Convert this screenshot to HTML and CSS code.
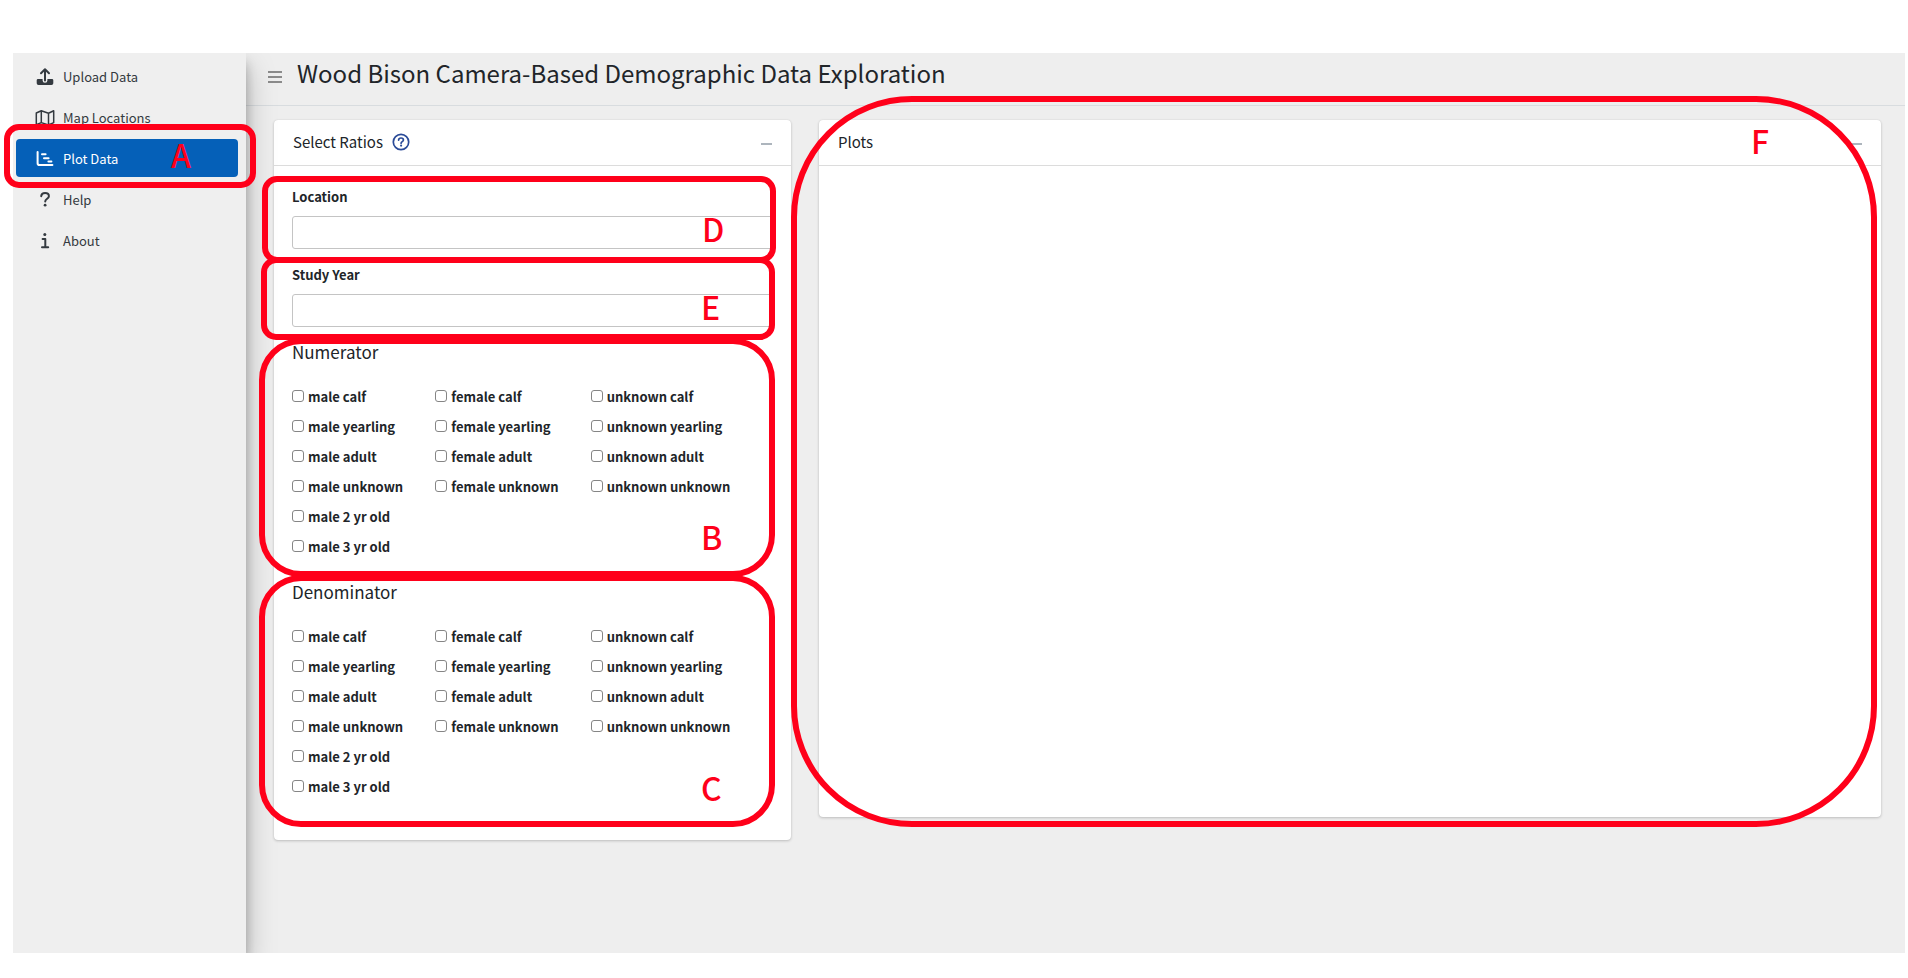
FILE: index.html
```
<!DOCTYPE html>
<html lang="en">
<head>
<meta charset="utf-8">
<title>Wood Bison Camera-Based Demographic Data Exploration</title>
<link rel="stylesheet" href="styles.css">
</head>
<body>
<div class="app">
  <nav class="sidebar">
    <a class="nav-item" href="#upload">
      <svg class="nav-icon" viewBox="0 0 20 20" aria-hidden="true"><path d="M10 13.5V2.4M6 6.2l4-4 4 4" class="stroke"/><path d="M3 12h4.6v1.4a2.4 2.4 0 0 0 4.8 0V12H17a1.3 1.3 0 0 1 1.3 1.3v2.9a1.8 1.8 0 0 1-1.8 1.8h-13a1.8 1.8 0 0 1-1.8-1.8v-2.9A1.3 1.3 0 0 1 3 12z"/></svg>
      <span>Upload Data</span>
    </a>
    <a class="nav-item" href="#map">
      <svg class="nav-icon" viewBox="0 0 20 20" aria-hidden="true"><path d="M1.3 5l5-2.2 7.2 2.4 5.2-2.4v11.8l-5.2 2.4-7.2-2.4-5 2.2zM6.3 2.8v11.8M13.5 5.2V17" class="stroke thin"/></svg>
      <span>Map Locations</span>
    </a>
    <a class="nav-item active" href="#plot">
      <svg class="nav-icon" viewBox="0 0 20 20" aria-hidden="true"><path d="M2.6 3v11.2a1.8 1.8 0 0 0 1.8 1.8h13M7 5.2h3.6M9 9.2h4.6M13.4 12.6h3" class="stroke"/></svg>
      <span>Plot Data</span>
      <span class="callout callout-a"><span class="callout-letter">A</span></span>
    </a>
    <a class="nav-item" href="#help">
      <svg class="nav-icon" viewBox="0 0 20 20" aria-hidden="true"><path d="M6.2 6.2C6.4 4.2 8 3 10.1 3c2.2 0 3.8 1.3 3.8 3.2 0 2.6-3.7 2.6-3.7 5.4" class="stroke"/><circle cx="10.1" cy="15.2" r="1.4"/></svg>
      <span>Help</span>
    </a>
    <a class="nav-item" href="#about">
      <svg class="nav-icon" viewBox="0 0 20 20" aria-hidden="true"><circle cx="9.8" cy="3.4" r="1.5"/><path d="M7.6 8h2.7v8M7 16.2h6.2" class="stroke"/></svg>
      <span>About</span>
    </a>
  </nav>

  <div class="content">
    <header class="topbar">
      <button class="menu-button" type="button" aria-label="Toggle menu">
        <svg viewBox="0 0 14 14" aria-hidden="true"><path d="M0 2h14M0 7h14M0 12h14"/></svg>
      </button>
      <h1 class="title">Wood Bison Camera-Based Demographic Data Exploration</h1>
    </header>

    <main class="columns">
      <div class="column column-narrow">
        <section class="card">
          <div class="card-header">
            <h2 class="card-title">Select Ratios</h2>
            <button class="help-button" type="button" aria-label="Help">
              <svg viewBox="0 0 18 18" aria-hidden="true"><circle cx="9" cy="9" r="7.7" class="ring"/><path d="M6.6 7.1c.1-1.3 1.1-2.1 2.4-2.1s2.4.8 2.4 2c0 1.6-2.3 1.6-2.3 3.2" class="ring"/><circle cx="9.1" cy="12.6" r="1.1" class="dot"/></svg>
            </button>
            <button class="collapse-button" type="button" aria-label="Collapse"></button>
          </div>
          <div class="card-body">
            <label class="field-label" for="location">Location</label>
            <input class="field-input" id="location" type="text">
            <label class="field-label" for="year">Study Year</label>
            <input class="field-input" id="year" type="text">

            <h3 class="group-title">Numerator</h3>
            <div class="checks">
              <div class="check-column">
                <label class="check"><input type="checkbox">male calf</label>
                <label class="check"><input type="checkbox">male yearling</label>
                <label class="check"><input type="checkbox">male adult</label>
                <label class="check"><input type="checkbox">male unknown</label>
                <label class="check"><input type="checkbox">male 2 yr old</label>
                <label class="check"><input type="checkbox">male 3 yr old</label>
              </div>
              <div class="check-column">
                <label class="check"><input type="checkbox">female calf</label>
                <label class="check"><input type="checkbox">female yearling</label>
                <label class="check"><input type="checkbox">female adult</label>
                <label class="check"><input type="checkbox">female unknown</label>
              </div>
              <div class="check-column">
                <label class="check"><input type="checkbox">unknown calf</label>
                <label class="check"><input type="checkbox">unknown yearling</label>
                <label class="check"><input type="checkbox">unknown adult</label>
                <label class="check"><input type="checkbox">unknown unknown</label>
              </div>
            </div>

            <h3 class="group-title">Denominator</h3>
            <div class="checks">
              <div class="check-column">
                <label class="check"><input type="checkbox">male calf</label>
                <label class="check"><input type="checkbox">male yearling</label>
                <label class="check"><input type="checkbox">male adult</label>
                <label class="check"><input type="checkbox">male unknown</label>
                <label class="check"><input type="checkbox">male 2 yr old</label>
                <label class="check"><input type="checkbox">male 3 yr old</label>
              </div>
              <div class="check-column">
                <label class="check"><input type="checkbox">female calf</label>
                <label class="check"><input type="checkbox">female yearling</label>
                <label class="check"><input type="checkbox">female adult</label>
                <label class="check"><input type="checkbox">female unknown</label>
              </div>
              <div class="check-column">
                <label class="check"><input type="checkbox">unknown calf</label>
                <label class="check"><input type="checkbox">unknown yearling</label>
                <label class="check"><input type="checkbox">unknown adult</label>
                <label class="check"><input type="checkbox">unknown unknown</label>
              </div>
            </div>
          </div>
          <div class="callout callout-d"><span class="callout-letter">D</span></div>
          <div class="callout callout-e"><span class="callout-letter">E</span></div>
          <div class="callout callout-b"><span class="callout-letter">B</span></div>
          <div class="callout callout-c"><span class="callout-letter">C</span></div>
        </section>
      </div>

      <div class="column column-wide">
        <section class="card">
          <div class="card-header">
            <h2 class="card-title">Plots</h2>
            <button class="collapse-button" type="button" aria-label="Collapse"></button>
          </div>
          <div class="plot-area"></div>
          <div class="callout callout-f"><span class="callout-letter">F</span></div>
        </section>
      </div>
    </main>
  </div>
</div>
</body>
</html>
```

FILE: styles.css
```
* {
  box-sizing: border-box;
}

body {
  margin: 0;
  background: #fff;
  color: #212529;
  font-family: "Noto Sans CJK SC", "Noto Sans", sans-serif;
  font-size: 13px;
  line-height: 20px;
}

h1, h2, h3 {
  margin: 0;
  font-weight: 400;
}

button {
  padding: 0;
  border: 0;
  background: none;
}

.app {
  display: flex;
  min-height: calc(100vh - 78px);
  margin: 53px 3px 25px 13px;
  background: #eee;
}

/* Sidebar */

.sidebar {
  position: relative;
  z-index: 2;
  display: flex;
  flex-direction: column;
  flex: 0 0 233px;
  gap: 3px;
  padding: 4px 8px 4px 3px;
  background: #efefef;
}

.sidebar::before {
  content: "";
  position: absolute;
  z-index: -1;
  inset: 0;
  box-shadow: 0 14px 28px rgba(0, 0, 0, 0.25), 0 10px 10px rgba(0, 0, 0, 0.22);
  clip-path: inset(0 -60px 0 0);
  pointer-events: none;
}

.nav-item {
  position: relative;
  display: flex;
  align-items: center;
  gap: 8px;
  height: 38px;
  padding: 2px 19px 0;
  border-radius: 4px;
  color: #343a40;
  text-decoration: none;
}

.nav-item.active {
  background: #0560b8;
  color: #fff;
}

.nav-icon {
  width: 20px;
  height: 20px;
  fill: currentColor;
}

.nav-icon .stroke {
  fill: none;
  stroke: currentColor;
  stroke-width: 2;
  stroke-linecap: round;
  stroke-linejoin: round;
}

.nav-icon .thin {
  stroke-width: 1.5;
}

/* Header */

.content {
  flex: 1;
  min-width: 0;
}

.topbar {
  display: flex;
  align-items: center;
  gap: 15px;
  height: 53px;
  padding: 0 22px 12px;
  border-bottom: 1px solid #d8dcdf;
}

.menu-button {
  width: 14px;
  height: 14px;
  margin-top: 8px;
}

.menu-button svg {
  display: block;
  stroke: #8b8b8b;
  stroke-width: 2;
}

.title {
  font-size: 24px;
  line-height: 32px;
}

/* Cards */

.columns {
  display: flex;
  align-items: flex-start;
  padding: 14px 10px 0 14px;
}

.column {
  min-width: 0;
  padding: 0 14px;
}

.column-narrow {
  width: 33.3333%;
}

.column-wide {
  width: 66.6667%;
}

.card {
  position: relative;
  border-radius: 4px;
  background: #fff;
  box-shadow: 0 0 1px rgba(0, 0, 0, 0.13), 0 1px 3px rgba(0, 0, 0, 0.2);
}

.card-header {
  display: flex;
  align-items: center;
  gap: 9px;
  height: 46px;
  padding: 0 19px 2px;
  border-bottom: 1px solid #dcdcdc;
}

.card-title {
  font-size: 15px;
  line-height: 20px;
}

.help-button {
  width: 18px;
  height: 18px;
}

.help-button svg {
  display: block;
}

.help-button .ring {
  fill: none;
  stroke: #294a98;
  stroke-width: 1.7;
  stroke-linecap: round;
}

.help-button .dot {
  fill: #294a98;
}

.collapse-button {
  width: 11px;
  height: 2px;
  margin: 4px 0 0 auto;
  background: #adb5bd;
}

.card-body {
  padding: 21px 18px 38px;
}

.plot-area {
  height: 651px;
}

/* Form */

.field-label {
  display: block;
  margin-bottom: 9px;
  font-weight: 700;
}

.field-input {
  display: block;
  width: 100%;
  height: 33px;
  margin-bottom: 16px;
  padding: 0 8px;
  border: 1px solid #c4c4c4;
  border-radius: 3px;
  background: #fff;
  font: inherit;
}

.group-title {
  padding-bottom: 21px;
  font-size: 17px;
  line-height: 18px;
}

.checks {
  display: flex;
  gap: 32px;
}

.checks + .group-title {
  padding-top: 21px;
}

.check {
  display: flex;
  align-items: center;
  gap: 4px;
  height: 30px;
  font-weight: 700;
  white-space: nowrap;
}

.check input {
  appearance: none;
  width: 12px;
  height: 12px;
  margin: 0 0 2px;
  border: 1px solid #858585;
  border-radius: 3px;
  background: #fff;
}

/* Annotation overlays */

.callout {
  position: absolute;
  z-index: 3;
  border: 6px solid #ff001a;
  border-radius: 15px;
  pointer-events: none;
}

.callout-letter {
  position: absolute;
  right: 44px;
  width: 24px;
  color: #ff001a;
  font-size: 32px;
  font-weight: 500;
  line-height: 32px;
}

.callout-a {
  inset: -15px -18px -11px -12px;
}

.callout-a .callout-letter {
  top: 8px;
  right: 55px;
}

.callout-d {
  top: 56px;
  right: 15px;
  left: -12px;
  height: 87px;
}

.callout-d .callout-letter {
  top: 30px;
}

.callout-e {
  top: 137px;
  right: 16px;
  left: -13px;
  height: 83px;
}

.callout-e .callout-letter {
  top: 27px;
}

.callout-b {
  top: 218px;
  right: 16px;
  left: -15px;
  height: 239px;
  border-radius: 42px;
}

.callout-b .callout-letter {
  top: 176px;
}

.callout-c {
  top: 455px;
  right: 16px;
  left: -15px;
  height: 252px;
  border-radius: 42px;
}

.callout-c .callout-letter {
  top: 190px;
}

.callout-f {
  inset: -24px 4px -10px -28px;
  border-radius: 121px;
}

.callout-f .callout-letter {
  top: 22px;
  right: 96px;
}
```
